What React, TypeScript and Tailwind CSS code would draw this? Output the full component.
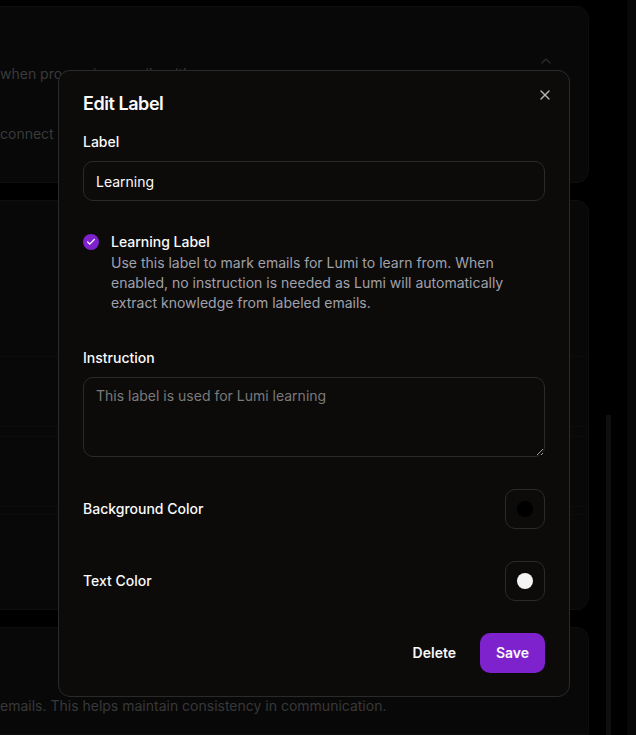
import React from "react";
import { X, ChevronUp, Check } from "lucide-react";

export default function App() {
  return (
    <div className="relative w-[636px] h-[735px] overflow-hidden bg-black font-['Inter',sans-serif] text-sm">
      {/* Background page (dimmed) */}
      <div className="flex h-full">
        <div className="w-[605px] shrink-0 -ml-4 flex flex-col pt-[6px]">
          <div className="h-[177px] rounded-xl bg-[#080808] border border-[#0e0e0e] pl-[15px] pr-[34px] pt-[46px]">
            <div className="flex items-start justify-between">
              <div className="pt-[11px] text-[#3a3a3a] leading-5">when processing emails with</div>
              <ChevronUp className="w-4 h-4 text-[#2a2a2a]" strokeWidth={2} />
            </div>
            <div className="mt-[40px] text-[#3a3a3a] leading-5">connect it</div>
          </div>
          <div className="mt-[17px] h-[410px] rounded-xl bg-[#080808] border border-[#0e0e0e] flex flex-col">
            <div className="h-[156px] border-b border-[#0c0c0c]" />
            <div className="h-[70px] border-b border-[#0c0c0c]" />
            <div className="h-[10px] border-b border-[#0c0c0c]" />
            <div className="h-[70px] border-b border-[#0c0c0c]" />
            <div className="h-[8px] border-b border-[#0c0c0c]" />
            <div className="flex-1" />
          </div>
          <div className="mt-[17px] flex-1 rounded-t-xl bg-[#080808] border border-[#0e0e0e] pl-[15px] pt-[68px]">
            <div className="text-[#383838] leading-5">emails. This helps maintain consistency in communication.</div>
          </div>
        </div>
        <div className="w-[17px] shrink-0" />
        <div className="w-[5px] shrink-0 flex flex-col">
          <div className="mt-[415px] flex-1 bg-[#0f0f0f]" />
        </div>
        <div className="w-[16px] shrink-0" />
        <div className="w-[9px] shrink-0 bg-[#070707]" />
      </div>

      {/* Modal */}
      <div className="absolute left-[58px] top-[70px] w-[512px] rounded-xl border border-[#2a2a2a] bg-[#0c0b0a] px-6 pt-[24px] pb-[23px]">
        <button className="absolute right-4 top-4 text-[#b4b4b4]">
          <X className="w-4 h-4" strokeWidth={2} />
        </button>
        <h2 className="text-lg font-semibold leading-none tracking-tight text-[#fafafa]">Edit Label</h2>

        <div className="mt-[19px] font-medium leading-5 text-[#fafafa]">Label</div>
        <input
          className="mt-[9px] block w-full h-10 rounded-[10px] border border-[#2a2a2a] bg-[#0c0b0a] px-3 text-sm text-[#fafafa] outline-none"
          defaultValue="Learning"
        />

        <div className="mt-[31px] flex items-start gap-3">
          <div className="mt-[2px] w-4 h-4 shrink-0 rounded-full bg-[#7e22ce] flex items-center justify-center">
            <Check className="w-[10px] h-[10px] text-white" strokeWidth={3} />
          </div>
          <div className="flex flex-col">
            <div className="font-medium leading-5 text-[#fafafa]">Learning Label</div>
            <div className="mt-px leading-5 text-[#a1a1aa]">
              Use this label to mark emails for Lumi to learn from. When enabled, no instruction is needed as Lumi will
              automatically extract knowledge from labeled emails.
            </div>
          </div>
        </div>

        <div className="mt-[35px] font-medium leading-5 text-[#fafafa]">Instruction</div>
        <textarea
          className="mt-[9px] block w-full h-20 rounded-[10px] border border-[#2a2a2a] bg-[#0c0b0a] px-3 py-2 text-sm leading-5 text-[#fafafa] placeholder:text-[#7a7a7a] outline-none"
          placeholder="This label is used for Lumi learning"
        />

        <div className="mt-8 flex items-center justify-between">
          <div className="font-medium text-[#fafafa]">Background Color</div>
          <div className="w-10 h-10 rounded-[10px] border border-[#2a2a2a] flex items-center justify-center">
            <div className="w-4 h-4 rounded-full bg-black" />
          </div>
        </div>

        <div className="mt-8 flex items-center justify-between">
          <div className="font-medium text-[#fafafa]">Text Color</div>
          <div className="w-10 h-10 rounded-[10px] border border-[#2a2a2a] flex items-center justify-center">
            <div className="w-4 h-4 rounded-full bg-[#f4f4f4]" />
          </div>
        </div>

        <div className="mt-8 flex items-center justify-end gap-2">
          <button className="h-10 px-4 font-semibold text-[#fafafa]">Delete</button>
          <button className="h-10 w-[65px] rounded-[10px] bg-[#7e22ce] font-semibold text-[#fafafa]">Save</button>
        </div>
      </div>
    </div>
  );
}
